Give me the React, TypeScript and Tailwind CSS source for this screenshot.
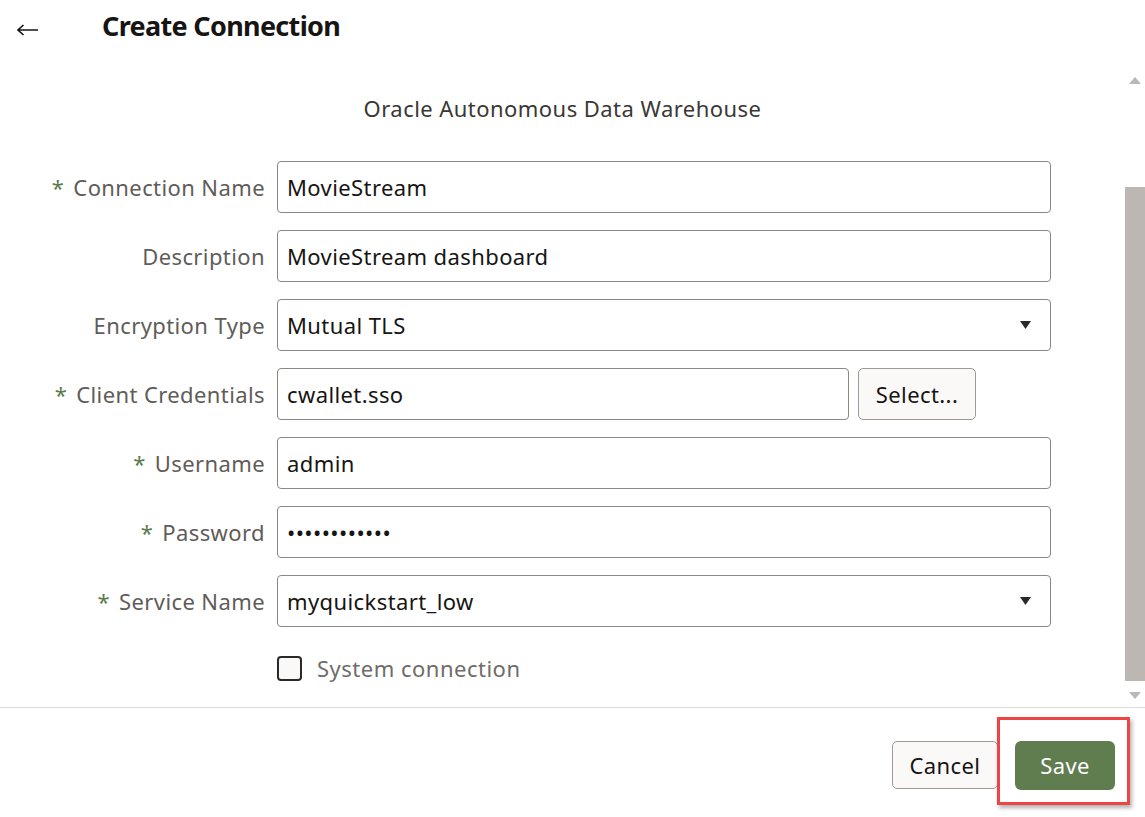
type Field = {
  label: string
  required?: boolean
  value: string
  select?: boolean
  button?: string
}

const fields: Field[] = [
  { label: 'Connection Name', required: true, value: 'MovieStream' },
  { label: 'Description', value: 'MovieStream dashboard' },
  { label: 'Encryption Type', value: 'Mutual TLS', select: true },
  { label: 'Client Credentials', required: true, value: 'cwallet.sso', button: 'Select...' },
  { label: 'Username', required: true, value: 'admin' },
  { label: 'Password', required: true, value: '••••••••••••' },
  { label: 'Service Name', required: true, value: 'myquickstart_low', select: true },
]

function Caret() {
  return (
    <svg width="11" height="8" viewBox="0 0 11 8" className="shrink-0">
      <path d="M0 0 H11 L5.5 8 Z" fill="#2b2926" />
    </svg>
  )
}

function FieldRow({ field }: { field: Field }) {
  return (
    <>
      <label className="flex h-[52px] items-center justify-end whitespace-nowrap text-[22px] tracking-[0.4px] text-[#5f5c59]">
        {field.required && <span className="mr-[9px] text-[#5b7b4c]">*</span>}
        {field.label}
      </label>
      <div className="flex h-[52px] items-center gap-[9px]">
        <div
          className={
            field.button
              ? 'flex h-full w-[572px] items-center rounded-[4px] border border-[#8c8783] bg-white pl-[9px] pr-[19px] text-[22px] tracking-[0.4px] text-[#161513]'
              : 'flex h-full flex-1 items-center rounded-[4px] border border-[#8c8783] bg-white pl-[9px] pr-[19px] text-[22px] tracking-[0.4px] text-[#161513]'
          }
        >
          <span className="flex-1 truncate">{field.value}</span>
          {field.select && <Caret />}
        </div>
        {field.button && (
          <button className="h-full w-[118px] rounded-[5px] border border-[#9e9a96] bg-[#fbf9f8] text-[22px] tracking-[0.4px] text-[#161513]">
            {field.button}
          </button>
        )}
      </div>
    </>
  )
}

export default function App() {
  return (
    <div
      className="flex h-[817px] w-[1145px] flex-col overflow-hidden bg-white"
      style={{ fontFamily: '"Noto Sans", "Open Sans", sans-serif' }}
    >
      {/* header */}
      <header className="flex h-[56px] shrink-0 items-center">
        <svg width="22" height="12" viewBox="0 0 22 12" className="ml-[17px] mt-[3px]">
          <path d="M1 6 H21 M6.5 1 L1 6 L6.5 11" fill="none" stroke="#161513" strokeWidth="1.6" />
        </svg>
        <h1 className="ml-[63px] -mt-[3px] text-[27px] font-bold tracking-tight text-[#161513]">
          Create Connection
        </h1>
      </header>

      {/* scroll region */}
      <div className="mt-[14px] flex min-h-0 flex-1">
        <div className="flex-1">
          <p className="mt-[22px] text-center text-[22px] tracking-[0.45px] text-[#3a3835]">
            Oracle Autonomous Data Warehouse
          </p>
          <div className="mt-[36px] grid grid-cols-[265px_774px] gap-x-3 gap-y-[17px]">
            {fields.map((f) => (
              <FieldRow key={f.label} field={f} />
            ))}
            <div />
            <div className="mt-[8px] flex items-center gap-[15px]">
              <span className="h-[25px] w-[25px] rounded-[4px] border-2 border-[#2b2926] bg-[#fbf9f8]" />
              <span className="text-[22px] tracking-[0.5px] text-[#6f6c69]">System connection</span>
            </div>
          </div>
        </div>

        {/* scrollbar */}
        <div className="flex w-[20px] shrink-0 flex-col items-center">
          <svg width="12" height="7" viewBox="0 0 12 7" className="mt-[7px]">
            <path d="M0 7 L6 0 L12 7 Z" fill="#bcb7b2" />
          </svg>
          <div className="mt-[103px] h-[494px] w-full bg-[#bcb7b2]" />
          <svg width="12" height="7" viewBox="0 0 12 7" className="mt-[11px]">
            <path d="M0 0 H12 L6 7 Z" fill="#bcb7b2" />
          </svg>
        </div>
      </div>

      {/* footer */}
      <div className="h-px shrink-0 bg-[#dcdad8]" />
      <footer className="flex h-[109px] shrink-0 items-start justify-end gap-[17px] pr-[30px] pt-[33px]">
        <button className="h-[48px] w-[106px] rounded-[5px] border border-[#9e9a96] bg-[#fbf9f8] text-[22px] tracking-[0.4px] text-[#161513]">
          Cancel
        </button>
        <div className="relative">
          <button className="h-[49px] w-[100px] rounded-[6px] bg-[#5f7d4f] text-[22px] tracking-[0.4px] text-white">
            Save
          </button>
          <div className="pointer-events-none absolute -bottom-[15px] -left-[18px] -right-[15px] -top-[24px] border-[3px] border-[#ef4444] shadow-[2px_3px_4px_rgba(0,0,0,0.3)]" />
        </div>
      </footer>
    </div>
  )
}
